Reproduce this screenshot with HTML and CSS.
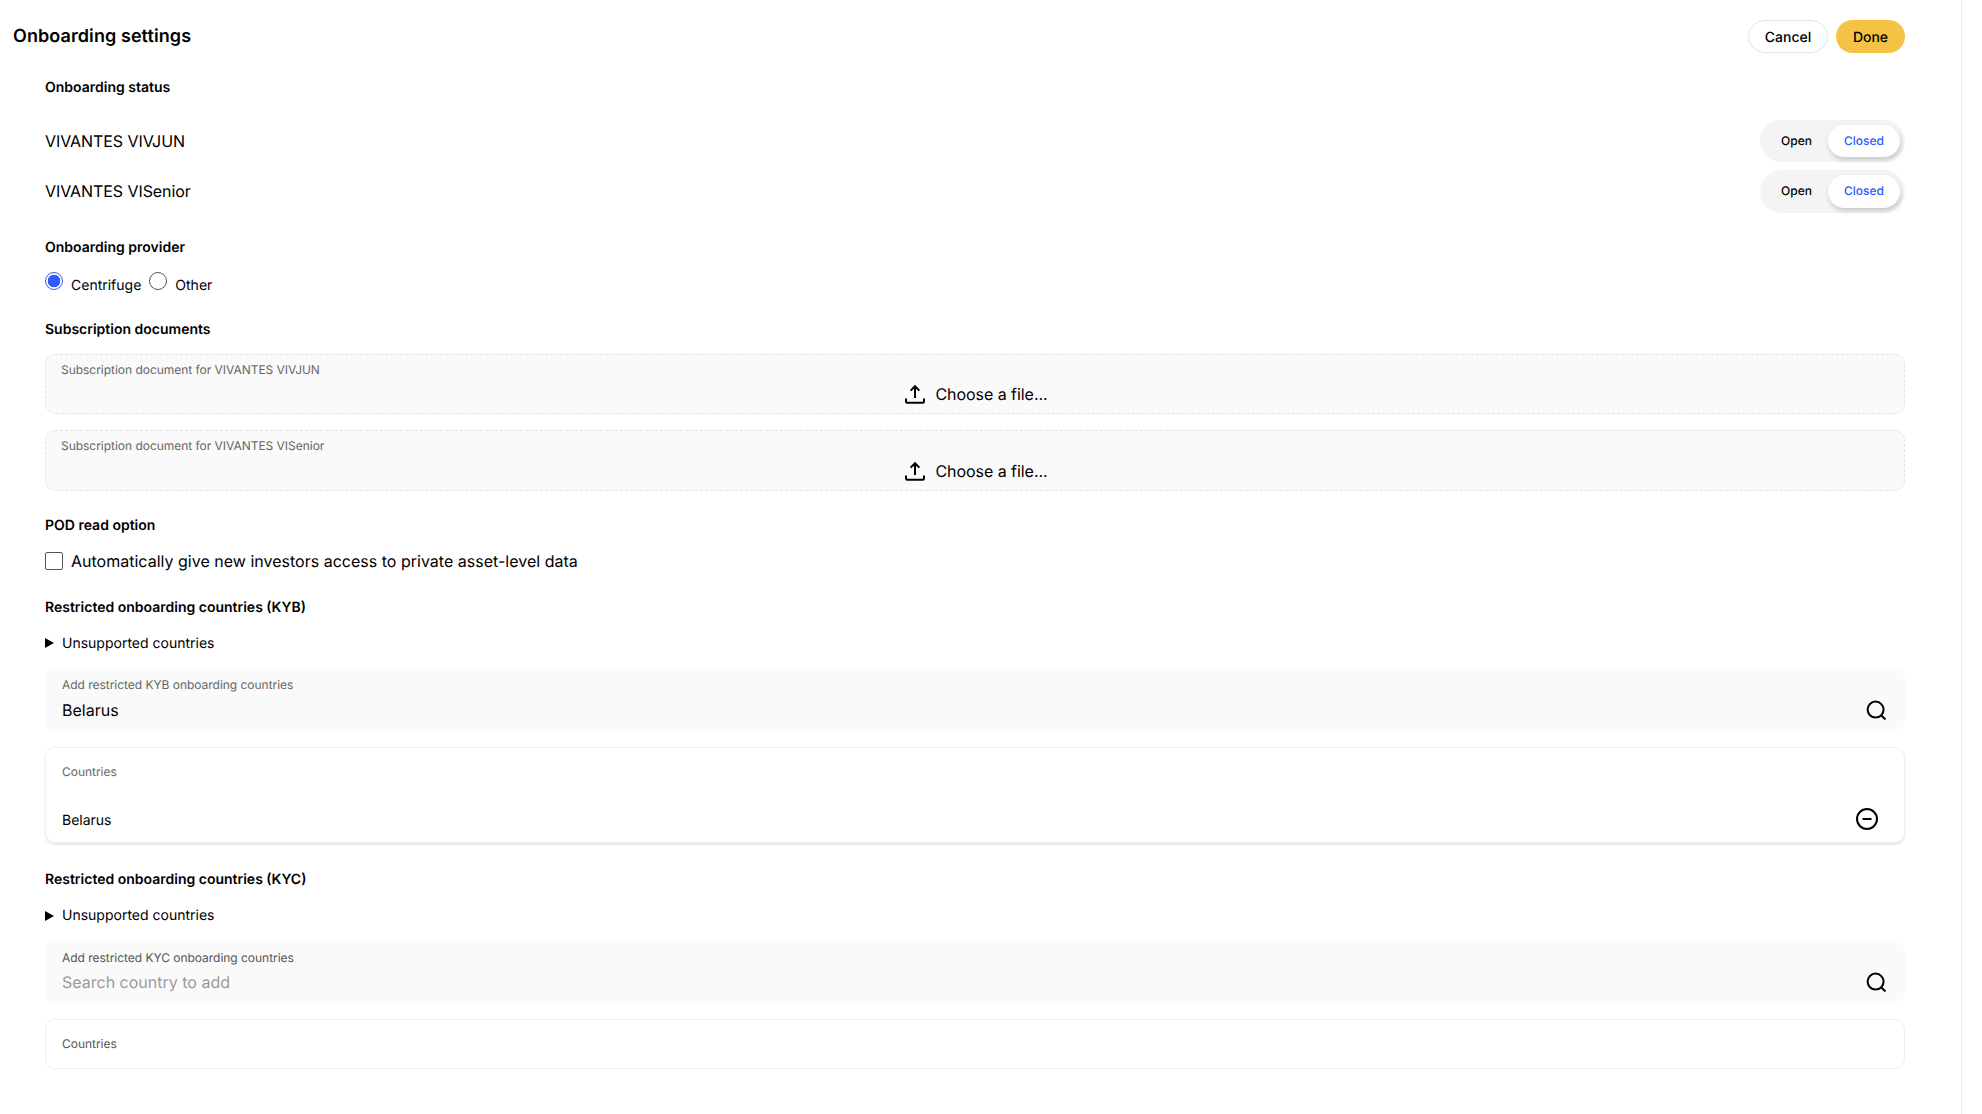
FILE: index.html
```html
<!DOCTYPE html>
<html lang="en">
<head>
<meta charset="utf-8">
<title>Onboarding settings</title>
<link rel="stylesheet" href="styles.css">
</head>
<body>
<main class="panel">
  <header class="header">
    <h1 class="title">Onboarding settings</h1>
    <div class="actions">
      <button class="btn btn-outline">Cancel</button>
      <button class="btn btn-primary">Done</button>
    </div>
  </header>

  <div class="content">
    <h2 class="heading h-status">Onboarding status</h2>
    <div class="status-row row-first">
      <span class="status-name">VIVANTES VIVJUN</span>
      <div class="toggle"><span class="opt">Open</span><span class="opt opt-active">Closed</span></div>
    </div>
    <div class="status-row row-second">
      <span class="status-name">VIVANTES VISenior</span>
      <div class="toggle"><span class="opt">Open</span><span class="opt opt-active">Closed</span></div>
    </div>

    <h2 class="heading h-provider">Onboarding provider</h2>
    <div class="radios">
      <label class="radio-label"><input class="radio" type="radio" name="prov" checked><span>Centrifuge</span></label>
      <label class="radio-label"><input class="radio" type="radio" name="prov"><span>Other</span></label>
    </div>

    <h2 class="heading h-docs">Subscription documents</h2>
    <div class="upload upload-a">
      <div class="field-label">Subscription document for VIVANTES VIVJUN</div>
      <div class="choose">
        <svg class="upload-icon" viewBox="0 0 20 20" fill="none" stroke="#000" stroke-width="2"><path d="M10 14V2.5M5.6 6.6 10 2.2l4.4 4.4M1 14.5v3a1.3 1.3 0 0 0 1.3 1.3h15.4a1.3 1.3 0 0 0 1.3-1.3v-3"/></svg>
        <span>Choose a file...</span>
      </div>
    </div>
    <div class="upload upload-b">
      <div class="field-label">Subscription document for VIVANTES VISenior</div>
      <div class="choose">
        <svg class="upload-icon" viewBox="0 0 20 20" fill="none" stroke="#000" stroke-width="2"><path d="M10 14V2.5M5.6 6.6 10 2.2l4.4 4.4M1 14.5v3a1.3 1.3 0 0 0 1.3 1.3h15.4a1.3 1.3 0 0 0 1.3-1.3v-3"/></svg>
        <span>Choose a file...</span>
      </div>
    </div>

    <h2 class="heading h-pod">POD read option</h2>
    <label class="check-row"><input class="check" type="checkbox"><span>Automatically give new investors access to private asset-level data</span></label>

    <h2 class="heading h-kyb">Restricted onboarding countries (KYB)</h2>
    <div class="disclosure"><span class="tri"></span><span>Unsupported countries</span></div>
    <div class="search-field">
      <div class="search-text">
        <div class="field-label">Add restricted KYB onboarding countries</div>
        <div class="search-value">Belarus</div>
      </div>
      <svg class="search-icon" viewBox="0 0 20 20" fill="none" stroke="#000" stroke-width="2"><circle cx="9.6" cy="9.6" r="8"/><path d="m15.3 15.5 4.2 4"/></svg>
    </div>
    <div class="countries countries-filled">
      <div class="field-label">Countries</div>
      <div class="country-row">
        <span class="country-name">Belarus</span>
        <svg class="minus-icon" viewBox="0 0 22 22" fill="none" stroke="#000" stroke-width="2"><circle cx="11" cy="11" r="10"/><path d="M6.5 11h9"/></svg>
      </div>
    </div>

    <h2 class="heading h-kyc">Restricted onboarding countries (KYC)</h2>
    <div class="disclosure disclosure-kyc"><span class="tri"></span><span>Unsupported countries</span></div>
    <div class="search-field search-kyc">
      <div class="search-text">
        <div class="field-label label-dark">Add restricted KYC onboarding countries</div>
        <div class="search-value placeholder">Search country to add</div>
      </div>
      <svg class="search-icon" viewBox="0 0 20 20" fill="none" stroke="#000" stroke-width="2"><circle cx="9.6" cy="9.6" r="8"/><path d="m15.3 15.5 4.2 4"/></svg>
    </div>
    <div class="countries countries-empty">
      <div class="field-label label-dark">Countries</div>
    </div>
  </div>
</main>
</body>
</html>
```
FILE: styles.css
```css
* { box-sizing: border-box; }
html, body { margin: 0; height: 100%; background: #fff; }
body { font-family: Inter, "Liberation Sans", sans-serif; color: #000; overflow: hidden; text-rendering: geometricPrecision; }

.panel { width: 1962px; height: 1114px; border-right: 1px solid #ececec; padding-right: 56px; padding-top: 20px; }

.header { display: flex; justify-content: space-between; align-items: center; height: 33px; padding-left: 13px; }
.title { margin: 0; font-size: 18px; line-height: 28px; font-weight: 600; letter-spacing: .08px; }
.actions { display: flex; gap: 8px; }
.btn { height: 33px; border-radius: 17px; font: 500 14px/20px Inter, sans-serif; color: #000; padding: 2px 0 0; text-rendering: geometricPrecision; }
.btn-outline { width: 80px; background: #fff; border: 1px solid #e4e4e4; }
.btn-primary { width: 69px; background: #f5c344; border: 0; }

.content { padding-left: 45px; }
.heading { margin: 0; height: 20px; padding-top: 1px; font-size: 14px; line-height: 20px; font-weight: 600; }
.h-status { margin-top: 24px; }
.h-provider { margin-top: 24px; }
.h-docs { margin-top: 25px; }
.h-pod { margin-top: 24px; }
.h-kyb { margin-top: 24px; }
.h-kyc { margin-top: 27px; padding-top: 0; }

.status-row { display: flex; justify-content: space-between; align-items: center; }
.row-first { margin-top: 23px; height: 42px; }
.row-second { margin-top: 8px; height: 43px; }
.row-second .status-name { margin-bottom: 1px; }
.row-second .opt { padding-bottom: 2px; }
.status-name { font-size: 16px; line-height: 24px; letter-spacing: -.07px; }
.toggle { display: flex; height: 100%; width: 145px; background: #f4f4f4; border-radius: 22px; padding: 5px; align-items: stretch; }
.opt { flex: 1; display: flex; align-items: center; justify-content: center; font-size: 12px; font-weight: 500; padding-bottom: 1px; }
.opt-active { flex: none; width: 72px; background: #fff; color: #2f5bff; border-radius: 18px; box-shadow: 1px 3px 5px rgba(0,0,0,.18); }

.radios { display: flex; gap: 8px; height: 22px; margin-top: 15px; }
.radio-label { display: flex; gap: 8px; font-size: 14px; line-height: 20px; align-items: flex-start; }
.radio-label span { margin-top: 4px; }
.radio { appearance: none; width: 18px; height: 18px; margin: 0; border: 1px solid #555; border-radius: 50%; background: #fff; }
.radio:checked { border-color: #2f5bff; background: radial-gradient(circle, #2f5bff 0 6px, #fff 6.6px); }

.h-docs + .upload { margin-top: 15px; }
.upload { background: #fafafa; border: 1px dashed #e2e2e2; border-radius: 10px; padding: 6px 15px 0; }
.upload-a { height: 60px; }
.upload-b { height: 61px; margin-top: 16px; }
.field-label { font-size: 12px; line-height: 18px; color: #666; letter-spacing: -.03px; }
.label-dark { color: #555; }
.choose { display: flex; justify-content: center; align-items: center; gap: 10px; font-size: 16px; line-height: 24px; letter-spacing: -.05px; margin-top: 3px; padding-left: 3px; }
.upload-b .choose { margin-top: 4px; }
.upload-icon { width: 20px; height: 20px; }

.check-row { display: flex; align-items: center; gap: 8px; font-size: 16px; line-height: 24px; letter-spacing: .01px; margin-top: 14px; height: 24px; }
.check { appearance: none; width: 18px; height: 18px; margin: 0; border: 1px solid #555; border-radius: 2px; background: #fff; }

.disclosure { display: flex; align-items: center; gap: 8px; height: 20px; font-size: 14px; line-height: 20px; margin-top: 16px; }
.disclosure span:last-child { padding-top: 2px; }
.disclosure-kyc span:last-child { padding-top: 0; }
.tri { width: 0; height: 0; margin-top: -1px; border-left: 9px solid #000; border-top: 5.5px solid transparent; border-bottom: 5.5px solid transparent; }

.search-field { display: flex; justify-content: space-between; align-items: flex-start; height: 63px; margin-top: 15px; background: #fafafa; border-radius: 12px; padding: 8px 19px 0 17px; }
.search-value { font-size: 16px; line-height: 24px; margin-top: 4px; }
.placeholder { color: #9a9a9a; margin-top: 3px; }
.search-icon { width: 20px; height: 20px; margin-top: 24px; }
.search-kyc { height: 62px; margin-top: 15px; }
.search-kyc .search-icon { margin-top: 23px; }

.countries { margin-top: 16px; background: #fff; border: 1px solid #efefef; border-radius: 10px; padding: 15px 16px 0; }
.countries-filled { height: 96px; box-shadow: 0 2px 2px rgba(0,0,0,.09); }
.countries-empty { height: 50px; }
.country-row { display: flex; justify-content: space-between; align-items: center; font-size: 14px; line-height: 20px; margin-top: 27px; padding-right: 10px; height: 22px; }
.country-name { margin-top: 3px; }
.minus-icon { width: 22px; height: 22px; }
```
